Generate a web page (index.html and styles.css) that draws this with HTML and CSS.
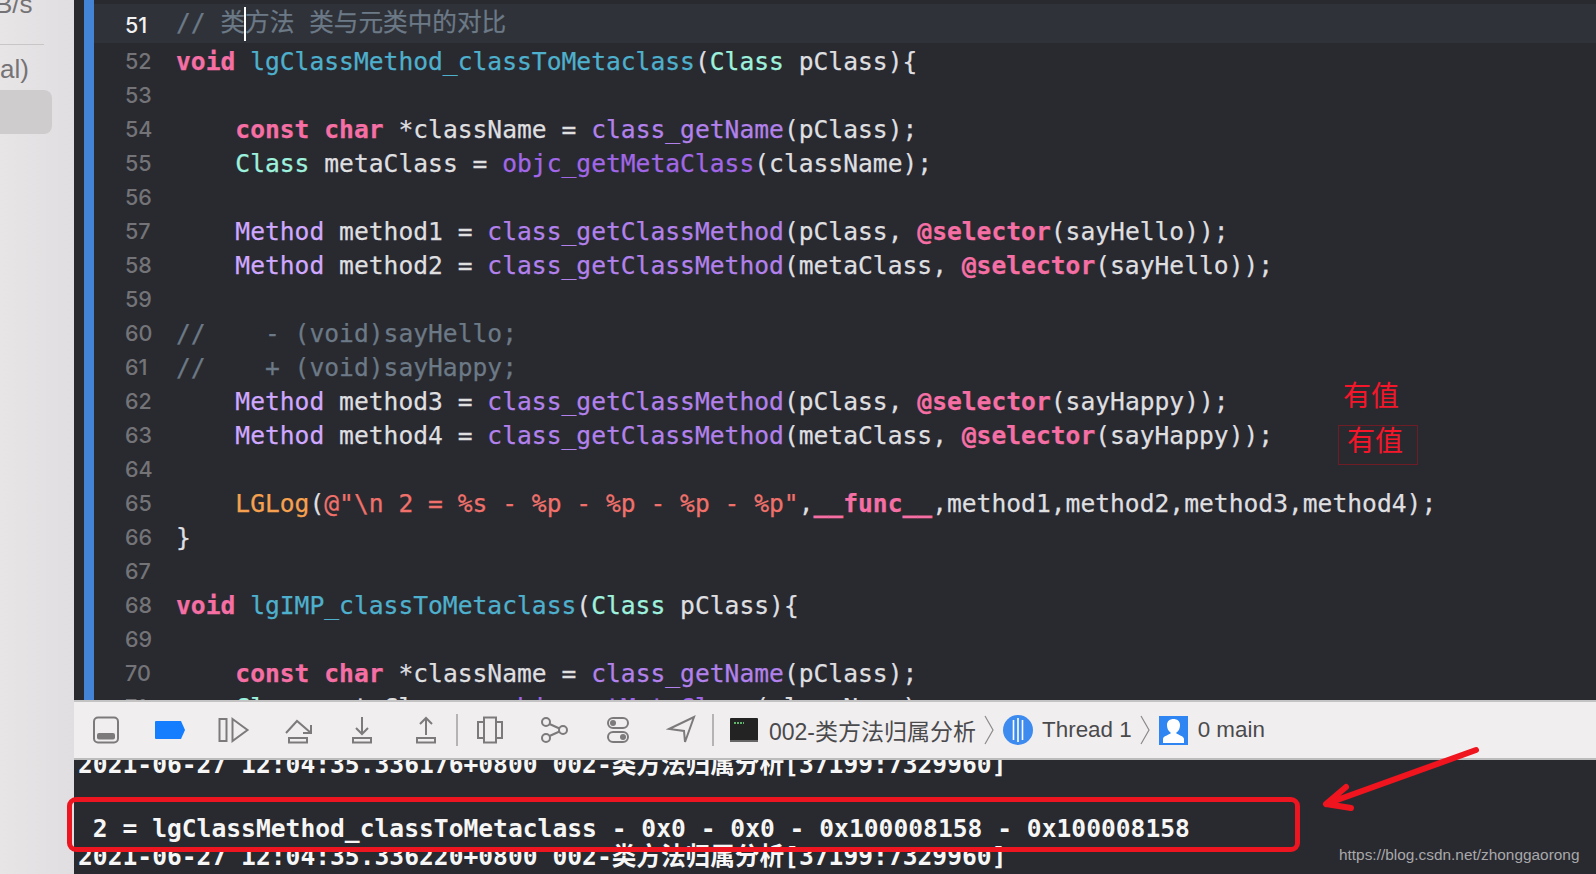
FILE: index.html
```html
<!DOCTYPE html>
<html lang="zh">
<head>
<meta charset="utf-8">
<title>Xcode</title>
<link rel="stylesheet" href="styles.css">
</head>
<body>
<div class="app">
  <aside class="sidebar">
    <div class="side-top">B/s</div>
    <div class="side-rule"></div>
    <div class="side-label">al)</div>
    <div class="side-pill"></div>
  </aside>
  <main class="main">
    <section class="editor">
      <div class="gutter-bar"></div>
      <div class="code">
        <div class="row current"><span class="num">51</span><span class="src c">// 类<span class="caret"></span>方法 类与元类中的对比</span></div>
        <div class="row"><span class="num">52</span><span class="src"><b class="k">void</b> <span class="fn">lgClassMethod_classToMetaclass</span>(<span class="t">Class</span> pClass){</span></div>
        <div class="row"><span class="num">53</span><span class="src"></span></div>
        <div class="row"><span class="num">54</span><span class="src">    <b class="k">const</b> <b class="k">char</b> *className = <span class="api">class_getName</span>(pClass);</span></div>
        <div class="row"><span class="num">55</span><span class="src">    <span class="t">Class</span> metaClass = <span class="api2">objc_getMetaClass</span>(className);</span></div>
        <div class="row"><span class="num">56</span><span class="src"></span></div>
        <div class="row"><span class="num">57</span><span class="src">    <span class="ty">Method</span> method1 = <span class="api">class_getClassMethod</span>(pClass, <b class="k">@selector</b>(sayHello));</span></div>
        <div class="row"><span class="num">58</span><span class="src">    <span class="ty">Method</span> method2 = <span class="api">class_getClassMethod</span>(metaClass, <b class="k">@selector</b>(sayHello));</span></div>
        <div class="row"><span class="num">59</span><span class="src"></span></div>
        <div class="row"><span class="num">60</span><span class="src c">//    - (void)sayHello;</span></div>
        <div class="row"><span class="num">61</span><span class="src c">//    + (void)sayHappy;</span></div>
        <div class="row"><span class="num">62</span><span class="src">    <span class="ty">Method</span> method3 = <span class="api">class_getClassMethod</span>(pClass, <b class="k">@selector</b>(sayHappy));</span></div>
        <div class="row"><span class="num">63</span><span class="src">    <span class="ty">Method</span> method4 = <span class="api">class_getClassMethod</span>(metaClass, <b class="k">@selector</b>(sayHappy));</span></div>
        <div class="row"><span class="num">64</span><span class="src"></span></div>
        <div class="row"><span class="num">65</span><span class="src">    <span class="mac">LGLog</span>(<span class="s">@"\n 2 = %s - %p - %p - %p - %p"</span>,<b class="k">__func__</b>,method1,method2,method3,method4);</span></div>
        <div class="row"><span class="num">66</span><span class="src">}</span></div>
        <div class="row"><span class="num">67</span><span class="src"></span></div>
        <div class="row"><span class="num">68</span><span class="src"><b class="k">void</b> <span class="fn">lgIMP_classToMetaclass</span>(<span class="t">Class</span> pClass){</span></div>
        <div class="row"><span class="num">69</span><span class="src"></span></div>
        <div class="row"><span class="num">70</span><span class="src">    <b class="k">const</b> <b class="k">char</b> *className = <span class="api">class_getName</span>(pClass);</span></div>
        <div class="row"><span class="num">71</span><span class="src">    <span class="t">Class</span> metaClass = <span class="api2">objc_getMetaClass</span>(className);</span></div>
      </div>
      <div class="note note-a">有值</div>
      <div class="note note-b">有值</div>
    </section>

    <nav class="toolbar">
      <span class="tool"><svg width="32" height="32" viewBox="0 0 32 32"><rect x="4" y="3.500" width="24" height="25" rx="4" class="ln"/><rect x="7" y="19" width="18" height="6.500" rx="2" class="fl"/></svg></span>
      <span class="tool"><svg width="32" height="32" viewBox="0 0 32 32"><path d="M1 8a1 1 0 0 1 1-1h25l4 9-4 9H2a1 1 0 0 1-1-1z" fill="#147eff"/></svg></span>
      <span class="tool"><svg width="32" height="32" viewBox="0 0 32 32"><rect x="1.500" y="5" width="7" height="22" class="ln"/><path d="M14.500 5l15 11-15 11z" class="ln"/></svg></span>
      <span class="tool"><svg width="32" height="32" viewBox="0 0 32 32"><path d="M4 19L15 7l14 12" class="ln"/><path d="M29 11v8h-8" class="ln"/><rect x="7" y="24" width="18" height="4.500" class="ln"/></svg></span>
      <span class="tool"><svg width="32" height="32" viewBox="0 0 32 32"><path d="M16 3v17M10 14l6 6 6-6" class="ln"/><rect x="7" y="24" width="18" height="4.500" class="ln"/></svg></span>
      <span class="tool"><svg width="32" height="32" viewBox="0 0 32 32"><path d="M16 21V4M10 10l6-6 6 6" class="ln"/><rect x="7" y="24" width="18" height="4.500" class="ln"/></svg></span>
      <span class="sep"></span>
      <span class="tool"><svg width="32" height="32" viewBox="0 0 32 32"><rect x="10" y="3.500" width="12" height="25" class="ln"/><path d="M10 8H4v16h6M22 8h6v16h-6" class="ln"/></svg></span>
      <span class="tool"><svg width="32" height="32" viewBox="0 0 32 32"><circle cx="8" cy="8" r="4" class="ln"/><circle cx="8" cy="24" r="4" class="ln"/><circle cx="25" cy="16" r="4" class="ln"/><path d="M11.500 10l10 4.500M11.500 22l10-4.500" class="ln"/></svg></span>
      <span class="tool"><svg width="32" height="32" viewBox="0 0 32 32"><rect x="6" y="4" width="20" height="10" rx="5" class="ln"/><rect x="6" y="18" width="20" height="10" rx="5" class="ln"/><circle cx="11" cy="9" r="3" class="fl"/><circle cx="21" cy="23" r="3" class="fl"/></svg></span>
      <span class="tool"><svg width="32" height="32" viewBox="0 0 32 32"><path d="M3 15L28 3l-9 25-1-11z" class="ln"/></svg></span>
      <span class="sep"></span>
      <span class="crumb term"><svg width="28" height="24" viewBox="0 0 28 24"><rect width="28" height="24" rx="1" fill="#232323"/><rect y="22" width="28" height="2" fill="#666"/><path d="M4 4h2v2H4zM7 4h2v2H7zM10 4h2v2h-2zM13 4h1v2h-1z" fill="#5fb36a"/></svg></span>
      <span class="crumb-text target">002-类方法归属分析</span>
      <svg class="chev" width="10" height="30" viewBox="0 0 10 30"><path d="M1 1l8 14-8 14" fill="none" stroke="#8a8a8a" stroke-width="1.2"/></svg>
      <svg class="thread" width="30" height="30" viewBox="0 0 30 30"><circle cx="15" cy="15" r="15" fill="#3d8bef"/><path d="M10.500 5v20M15 3v24M19.500 5v20" stroke="#fff" stroke-width="1.600"/></svg>
      <span class="crumb-text tight">Thread 1</span>
      <svg class="chev" width="10" height="30" viewBox="0 0 10 30"><path d="M1 1l8 14-8 14" fill="none" stroke="#8a8a8a" stroke-width="1.2"/></svg>
      <svg class="person" width="29" height="29" viewBox="0 0 29 29"><rect width="29" height="29" fill="#2f86f2"/><path d="M4 27v-4c0-3 6-4 8-6-3-2-4-5-4-8 0-4 3-6 6.500-6S21 5 21 9c0 3-1 6-4 8 2 2 8 3 8 6v4z" fill="#fff"/></svg>
      <span class="crumb-text main-frame">0 main</span>
    </nav>

    <section class="console">
      <div class="log first">2021-06-27 12:04:35.336176+0800 002-类方法归属分析[37199:7329960]</div>
      <div class="log"></div>
      <div class="log out"> 2 = lgClassMethod_classToMetaclass - 0x0 - 0x0 - 0x100008158 - 0x100008158</div>
      <div class="log last">2021-06-27 12:04:35.336220+0800 002-类方法归属分析[37199:7329960]</div>
      <div class="red-box"></div>
      <svg class="arrow" width="170" height="76" viewBox="0 0 170 76"><path d="M160 5L10 59M10 59L30 42M10 59L35 63" fill="none" stroke="#f0141e" stroke-width="6" stroke-linecap="round"/></svg>
      <div class="mark">https://blog.csdn.net/zhonggaorong</div>
    </section>
  </main>
</div>
</body>
</html>
```

FILE: styles.css
```css
html, body {
  margin: 0;
  height: 100%;
  overflow: hidden;
  background: #292a30;
}
.app {
  display: flex;
  width: 1596px;
  height: 874px;
  overflow: hidden;
}
.sidebar {
  flex: 0 0 74px;
  background: linear-gradient(90deg, #e8e5e7, #e1dee1);
  font: 26px "Liberation Sans", sans-serif;
  color: #757375;
  box-sizing: border-box;
  height: 874px;
  overflow: hidden;
}
.side-top {
  height: 44px;
  margin-top: -14px;
  margin-left: -5px;
  line-height: 36px;
}
.side-rule {
  width: 44px;
  height: 1px;
  background: #c9c6c8;
  margin-top: 14px;
}
.side-label {
  height: 45px;
  line-height: 48px;
}
.side-pill {
  width: 52px;
  height: 44px;
  background: #cfccce;
  border-radius: 0 8px 8px 0;
}
.main {
  flex: 1;
  display: flex;
  flex-direction: column;
  min-width: 0;
}
.editor {
  position: relative;
  height: 700px;
  flex: none;
  display: flex;
  overflow: hidden;
  background: #292a30;
  padding-left: 10px;
  box-sizing: border-box;
}
.gutter-bar {
  flex: 0 0 10px;
  background: #4484d6;
}
.code {
  flex: 1;
  padding-top: 4px;
  font: 24.64px "DejaVu Sans Mono", "Noto Sans CJK SC", monospace;
  color: #dfdfe0;
  -webkit-text-stroke: 0.25px;
}
.row {
  display: flex;
  height: 34px;
  line-height: 37px;
  white-space: pre;
}
.row.current {
  height: 39px;
  line-height: 38px;
  background: #2f3239;
}
.num {
  flex: 0 0 51px;
  margin-left: 31px;
  font: 500 21.5px/36px Inter, "Liberation Sans", sans-serif;
  color: #747478;
  -webkit-text-stroke: 0;
}
.current .num {
  color: #f2f2f2;
  line-height: 42px;
}
.src b { font-weight: 700; }
.k { color: #f56fa5; }
.c { color: #6c7986; }
.fn { color: #4eb0cc; }
.t { color: #9ef1dd; }
.ty { color: #d0a8ff; }
.api { color: #b281eb; }
.api2 { color: #a167e6; }
.s { color: #f0716b; }
.mac { color: #f5a14f; }
.caret {
  display: inline-block;
  width: 2px;
  height: 34px;
  margin: 0 -1px;
  vertical-align: middle;
  background: #fff;
}
.note {
  position: absolute;
  font: 28px/30px "Noto Sans CJK SC", sans-serif;
  color: #f5162a;
  -webkit-text-stroke: 0;
}
.note-a {
  left: 1269px;
  top: 379px;
}
.note-b {
  left: 1264px;
  top: 425px;
  width: 80px;
  height: 40px;
  box-sizing: border-box;
  border: 1px solid #6e1c26;
  padding-left: 8px;
  line-height: 26px;
}
.toolbar {
  position: relative;
  z-index: 1;
  flex: 0 0 60px;
  box-sizing: border-box;
  display: flex;
  align-items: center;
  background: #f1eef0;
  border-top: 2px solid #c4c3c4;
  border-bottom: 2px solid #bdbcbd;
  font: 22.4px "Liberation Sans", "Noto Sans CJK SC", sans-serif;
  color: #4a4a4c;
}
.tool {
  flex: 0 0 64px;
  display: flex;
  justify-content: center;
}
.ln {
  fill: none;
  stroke: #7d7a7b;
  stroke-width: 2;
}
.fl { fill: #7d7a7b; }
.sep {
  flex: none;
  width: 2px;
  height: 32px;
  background: #b5b4b5;
  margin-left: -2px;
}
.crumb { display: flex; }
.term { margin-left: 16px; }
.crumb-text {
  flex: none;
  margin-left: 11px;
  white-space: nowrap;
}
.target { font-size: 23px; }
.tight { margin-left: 9px; }
.main-frame { margin-left: 10px; }
.chev { margin-left: 8px; flex: none; }
.thread { margin-left: 9px; flex: none; }
.person { margin-left: 9px; flex: none; }
.console {
  position: relative;
  flex: 1;
  background: #292a30;
  padding-left: 4px;
  font: 700 24.64px "DejaVu Sans Mono", "Noto Sans CJK SC", monospace;
  color: #f6f6f6;
}
.log {
  height: 32px;
  line-height: 32px;
  white-space: pre;
}
.first { margin-top: -11px; }
.last { margin-top: -4px; }
.red-box {
  position: absolute;
  z-index: 2;
  left: -7px;
  top: 37px;
  width: 1223px;
  height: 45px;
  border: 5px solid #ec1520;
  border-radius: 9px;
}
.arrow {
  position: absolute;
  z-index: 2;
  left: 1242px;
  top: -15px;
}
.mark {
  position: absolute;
  left: 1265px;
  top: 85px;
  font: 400 15.4px/20px "Liberation Sans", sans-serif;
  color: #a8a8aa;
  white-space: nowrap;
}
```
